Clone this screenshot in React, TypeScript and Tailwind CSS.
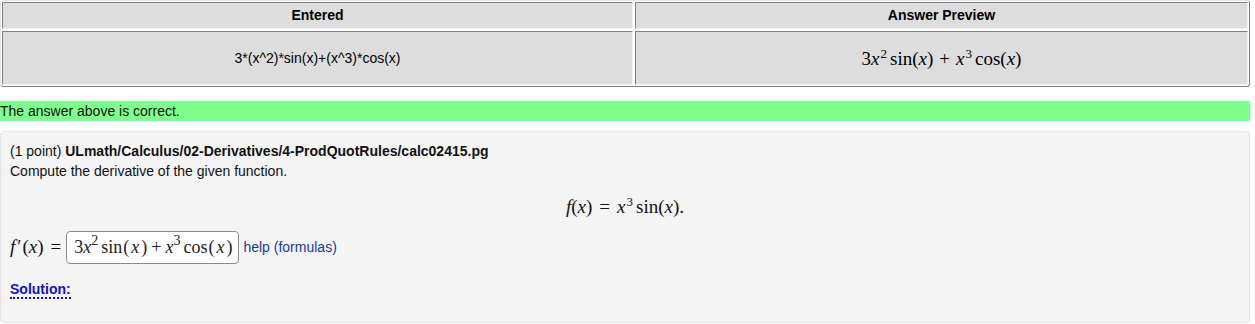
import React from "react";

const serif = "font-['Liberation_Serif','Times_New_Roman',serif]";

function X() {
  return <span className="italic">x</span>;
}

export default function App() {
  return (
    <div className="w-[1255px] h-[324px] bg-white text-[14px] text-black font-['Liberation_Sans',Arial,sans-serif] overflow-hidden">
      {/* results table */}
      <div className="w-[1250px] border border-t-[#e6e6e6] border-l-[#e6e6e6] border-r-[#808080] border-b-[#808080] rounded-[3px] p-px grid grid-cols-[631px_1fr] grid-rows-[27px_54px] gap-[2px]">
        <div className="bg-[#dddddd] border border-t-[#808080] border-l-[#808080] border-r-[#f2f2f2] border-b-[#f2f2f2] flex items-center justify-center font-bold">
          Entered
        </div>
        <div className="bg-[#dddddd] border border-t-[#808080] border-l-[#808080] border-r-[#f2f2f2] border-b-[#f2f2f2] flex items-center justify-center font-bold">
          Answer Preview
        </div>
        <div className="bg-[#dddddd] border border-t-[#808080] border-l-[#808080] border-r-[#f2f2f2] border-b-[#f2f2f2] flex items-center justify-center">
          3*(x^2)*sin(x)+(x^3)*cos(x)
        </div>
        <div className="bg-[#dddddd] border border-t-[#808080] border-l-[#808080] border-r-[#f2f2f2] border-b-[#f2f2f2] flex items-center justify-center">
          <span className={`${serif} text-[19px] leading-none`}>
            3<X />
            <sup className="text-[13px] -top-[7px] ml-[1px]">2</sup>
            <span className="ml-[3px]">sin(</span>
            <X />)<span className="mx-[6px]">+</span>
            <X />
            <sup className="text-[13px] -top-[7px] ml-[1px]">3</sup>
            <span className="ml-[3px]">cos(</span>
            <X />)
          </span>
        </div>
      </div>

      {/* correct bar */}
      <div className="mt-[14px] w-[1250px] h-[20px] leading-[20px] bg-[#80ff8c] text-[#111]">
        The answer above is correct.
      </div>

      {/* problem box */}
      <div className="mt-[10px] w-[1250px] h-[192px] bg-[#f4f4f4] border border-[#e3e3e3] rounded-[4px] px-[9px] pt-[9px] text-[#111]">
        <div className="leading-[20px]">
          (1 point) <span className="font-bold">ULmath/Calculus/02-Derivatives/4-ProdQuotRules/calc02415.pg</span>
        </div>
        <div className="leading-[20px]">Compute the derivative of the given function.</div>

        <div className={`mt-[14px] flex justify-center ${serif} text-[19px] leading-[24px]`}>
          <span>
            <span className="italic">f</span>(<X />)<span className="mx-[7px]">=</span>
            <X />
            <sup className="text-[13px] -top-[7px] ml-[1px]">3</sup>
            <span className="ml-[3px]">sin(</span>
            <X />).
          </span>
        </div>

        <div className="mt-[12px] flex items-center h-[33px]">
          <span className={`${serif} text-[19px]`}>
            <span className="italic">f</span>
            <span className="ml-[2px] mr-[1px]">′</span>(<X />)<span className="ml-[7px]">=</span>
          </span>
          <div className={`ml-[5px] h-[33px] pl-[7px] pr-[6px] flex items-center bg-white border border-[#8a8a8a] rounded-[4px] ${serif} text-[18px] text-[#222]`}>
            3<X />
            <sup className="text-[14px] -top-[7px]">2</sup>
            <span className="ml-[3px]">sin</span>
            <span className="ml-[1px]">(</span>
            <span className="mx-[2px]"><X /></span>)
            <span className="mx-[4px]">+</span>
            <X />
            <sup className="text-[14px] -top-[7px]">3</sup>
            <span className="ml-[3px]">cos</span>
            <span className="ml-[1px]">(</span>
            <span className="mx-[2px]"><X /></span>)
          </div>
          <span className="ml-[4px] text-[#1a3a96]">help (formulas)</span>
        </div>

        <div className="mt-[15px] leading-[20px]">
          <span className="font-bold text-[#1111bb] border-b-2 border-dotted border-[#1111bb]">Solution:</span>
        </div>
      </div>
    </div>
  );
}
